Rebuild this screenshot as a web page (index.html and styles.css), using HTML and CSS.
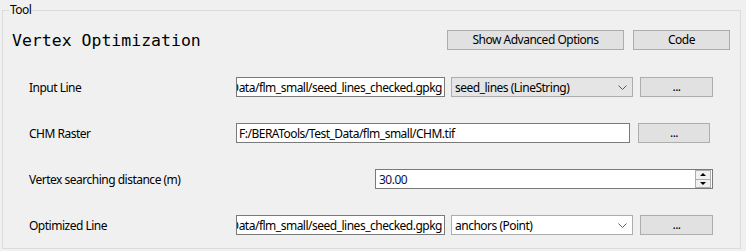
FILE: index.html
```html
<!DOCTYPE html>
<html lang="en">
<head>
  <meta charset="UTF-8" />
  <title>Vertex Optimization</title>
  <link rel="stylesheet" href="styles.css">
</head>
<body>
  <fieldset class="tool">
    <legend>Tool</legend>
    <div class="header">
      <h1>Vertex Optimization</h1>
      <button class="btn adv">Show Advanced Options</button>
      <button class="btn code">Code</button>
    </div>

    <div class="rows">
      <div class="row">
        <span class="label">Input Line</span>
        <div class="field path"><span>F:/BERATools/Test_Data/flm_small/seed_lines_checked.gpkg</span></div>
        <div class="combo">
          <span>seed_lines (LineString)</span>
          <svg width="9" height="5" viewBox="0 0 9 5"><polyline points="0.5,0.5 4.5,4.5 8.5,0.5" fill="none" stroke="#5a5a5a" stroke-width="1"/></svg>
        </div>
        <button class="btn browse">...</button>
      </div>

      <div class="row">
        <span class="label">CHM Raster</span>
        <div class="field raster"><span>F:/BERATools/Test_Data/flm_small/CHM.tif</span></div>
        <button class="btn browse wide-gap">...</button>
      </div>

      <div class="row">
        <span class="label">Vertex searching distance (m)</span>
        <div class="spin">
          <span>30.00</span>
          <div class="arrows">
            <div class="up"></div>
            <div class="down"></div>
          </div>
        </div>
      </div>

      <div class="row">
        <span class="label">Optimized Line</span>
        <div class="field path"><span>F:/BERATools/Test_Data/flm_small/seed_lines_checked.gpkg</span></div>
        <div class="combo editable">
          <span>anchors (Point)</span>
          <svg width="9" height="5" viewBox="0 0 9 5"><polyline points="0.5,0.5 4.5,4.5 8.5,0.5" fill="none" stroke="#5a5a5a" stroke-width="1"/></svg>
        </div>
        <button class="btn browse">...</button>
      </div>
    </div>
  </fieldset>
</body>
</html>
```

FILE: styles.css
```css
body {
  margin: 0;
  background: #f0f0f0;
  font-family: "Noto Sans", "Open Sans", Arial, sans-serif;
  font-size: 12px;
  letter-spacing: -0.5px;
  color: #000;
  overflow: hidden;
}
.tool {
  margin: 3px 5px 0 2px;
  padding: 0;
  border: 1px solid #dcdcdc;
  height: 244px;
  min-width: 0;
}
.tool legend {
  margin-left: 6px;
  padding: 0 1px;
  font-size: 12px;
  line-height: 14px;
}
.header {
  display: flex;
  align-items: center;
  padding: 13px 10px 0 9px;
  height: 20px;
}
.header h1 {
  margin: 0;
  flex: 1;
  font-family: "DejaVu Sans Mono", monospace;
  font-weight: normal;
  font-size: 16.5px;
  letter-spacing: 0;
  line-height: 20px;
  position: relative;
  top: 1px;
}
.btn {
  height: 20px;
  padding: 0;
  background: #e1e1e1;
  border: 1px solid #adadad;
  font-family: inherit;
  font-size: 12px;
  letter-spacing: -0.5px;
  color: #000;
  line-height: 16px;
}
.adv {
  width: 177px;
}
.code {
  width: 97px;
  margin-left: 9px;
}
.rows {
  display: flex;
  flex-direction: column;
  gap: 26px;
  padding: 27px 0 0 26px;
}
.row {
  display: flex;
  align-items: center;
  height: 20px;
}
.label {
  width: 207px;
}
.field {
  height: 20px;
  box-sizing: border-box;
  border: 1px solid #7a7a7a;
  background: #fff;
  display: flex;
  align-items: center;
  overflow: hidden;
  white-space: nowrap;
  padding: 0 2px;
}
.path {
  width: 209px;
  justify-content: flex-end;
}
.raster {
  width: 394px;
}
.combo {
  width: 182px;
  height: 20px;
  box-sizing: border-box;
  margin-left: 6px;
  border: 1px solid #adadad;
  background: #e5e5e5;
  display: flex;
  align-items: center;
  justify-content: space-between;
  padding: 0 5px 0 3px;
}
.combo.editable {
  background: #fff;
}
.browse {
  width: 73px;
  margin-left: 7px;
}
.browse.wide-gap {
  width: 72px;
  margin-left: 8px;
}
.spin {
  width: 338px;
  height: 20px;
  box-sizing: border-box;
  margin-left: 139px;
  border: 1px solid #7a7a7a;
  background: #fff;
  display: flex;
  align-items: center;
  justify-content: space-between;
  padding: 0 1px 0 3px;
  color: #10104a;
}
.arrows {
  width: 14px;
  height: 16px;
  display: flex;
  flex-direction: column;
  border: 1px solid #adadad;
  background: #f0f0f0;
}
.arrows div {
  flex: 1;
  display: flex;
  align-items: center;
  justify-content: center;
}
.arrows .up {
  border-bottom: 1px solid #adadad;
}
.arrows .up::after {
  content: "";
  border-left: 3px solid transparent;
  border-right: 3px solid transparent;
  border-bottom: 3px solid #000;
}
.arrows .down::after {
  content: "";
  border-left: 3px solid transparent;
  border-right: 3px solid transparent;
  border-top: 3px solid #000;
}
```
